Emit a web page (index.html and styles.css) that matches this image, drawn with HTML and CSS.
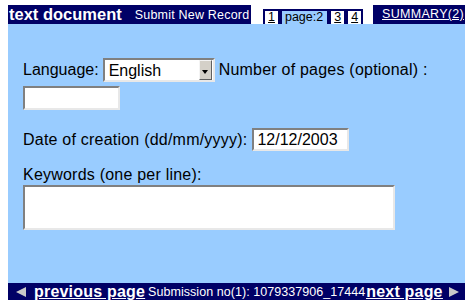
FILE: index.html
```html
<!DOCTYPE html>
<html lang="en">
<head>
    <meta charset="UTF-8">
    <title>text document - Submit New Record</title>
    <link rel="stylesheet" href="styles.css">
</head>
<body>
    <div class="topbar">
        <div class="title">
            <span class="doc">text document</span>
            <span class="sub">Submit New Record</span>
        </div>
        <nav class="tabs">
            <a href="#" class="tab">1</a>
            <span class="tab current">page:2</span>
            <a href="#" class="tab">3</a>
            <a href="#" class="tab">4</a>
        </nav>
        <a href="#" class="summary">SUMMARY(2)</a>
    </div>

    <form class="panel">
        <div class="row wrap">
            <label for="lang" class="short">Language:</label>
            <span class="select">
                <select id="lang">
                    <option>English</option>
                    <option>French</option>
                    <option>German</option>
                </select>
                <span class="drop"><span class="tri"></span></span>
            </span>
            <label for="pages">Number of pages (optional) :</label>
            <input type="text" id="pages" class="field">
        </div>
        <div class="row date">
            <label for="date">Date of creation (dd/mm/yyyy):</label>
            <input type="text" id="date" class="field" value="12/12/2003">
        </div>
        <label for="kw" class="block">Keywords (one per line):</label>
        <textarea id="kw" class="field keywords"></textarea>
    </form>

    <div class="bottombar">
        <a href="#" class="nav prev"><span class="arrow left"></span><span class="link">previous page</span></a>
        <span class="subno">Submission no(1): 1079337906_17444</span>
        <a href="#" class="nav next"><span class="link">next page</span><span class="arrow right"></span></a>
    </div>
</body>
</html>
```

FILE: styles.css
```css
/* general */
body {
    margin: 5px 5px 0 8px;
    background: white;
    font-family: "Liberation Sans", Arial, sans-serif;
    font-size: 16px;
    color: black;
}
a {
    color: inherit;
}

/* top bar */
.topbar {
    display: flex;
    align-items: flex-end;
    height: 19px;
}
.title {
    box-sizing: border-box;
    width: 243px;
    height: 19px;
    padding-left: 1px;
    display: flex;
    align-items: center;
    gap: 13px;
    background: #000066;
    color: white;
    white-space: nowrap;
}
.doc {
    font-weight: bold;
    font-size: 16.5px;
}
.sub {
    font-size: 12.5px;
    letter-spacing: 0.2px;
}
.tabs {
    display: flex;
    margin-left: 12px;
    height: 15px;
}
.tab {
    box-sizing: border-box;
    height: 15px;
    padding: 0 3px;
    border: 2px solid #000066;
    border-bottom: none;
    background: white;
    font-size: 12.5px;
    line-height: 13px;
    color: black;
}
.tab.current {
    background: #99ccff;
    padding: 0 4px 0 3px;
}
.summary {
    box-sizing: border-box;
    margin-left: auto;
    width: 92px;
    height: 19px;
    padding-left: 9px;
    background: #000066;
    color: white;
    font-size: 12.5px;
    letter-spacing: 0.3px;
    line-height: 19px;
}

/* form */
.panel {
    box-sizing: border-box;
    height: 259px;
    margin: 0;
    padding: 34px 15px 0 15px;
    background: #99ccff;
    letter-spacing: 0.22px;
}
.row {
    display: flex;
    align-items: center;
    gap: 4px;
}
.row.wrap {
    flex-wrap: wrap;
}
.short {
    letter-spacing: 0;
}
.row.date {
    margin-top: 18px;
    gap: 5px;
}
.field {
    box-sizing: border-box;
    width: 97px;
    height: 24px;
    margin: 0;
    padding: 0 3px;
    border: 2px solid;
    border-color: #808080 #e8e8e8 #e8e8e8 #808080;
    background: white;
    font-family: inherit;
    font-size: 16px;
    letter-spacing: 0;
}
.row.date .field {
    height: 23px;
}
.select {
    box-sizing: border-box;
    display: flex;
    align-items: center;
    width: 112px;
    height: 24px;
    border: 2px solid;
    border-color: #808080 #e8e8e8 #e8e8e8 #808080;
    background: white;
}
.select select {
    appearance: none;
    flex: 1;
    min-width: 0;
    height: 20px;
    border: none;
    padding: 0 0 0 4px;
    background: transparent;
    font-family: inherit;
    font-size: 16px;
    color: black;
}
.drop {
    box-sizing: border-box;
    width: 13px;
    height: 20px;
    margin-right: 1px;
    display: flex;
    align-items: center;
    justify-content: center;
    background: #d4d0c8;
    border: 1px solid;
    border-color: #f4f4f4 #606060 #606060 #f4f4f4;
}
.tri {
    width: 0;
    height: 0;
    border-left: 3px solid transparent;
    border-right: 3px solid transparent;
    border-top: 4px solid black;
    margin-top: 3px;
}
.block {
    display: block;
    margin-top: 15px;
    line-height: 18px;
}
.keywords {
    display: block;
    width: 372px;
    height: 45px;
    margin-top: 1px;
    resize: none;
}

/* bottom bar */
.bottombar {
    display: flex;
    align-items: center;
    height: 17px;
    padding-left: 8px;
    background: #000066;
    color: white;
    white-space: nowrap;
}
.nav {
    display: flex;
    align-items: center;
    font-weight: bold;
    font-size: 16px;
    letter-spacing: 0.2px;
    line-height: 17px;
}
.prev {
    gap: 8px;
}
.next {
    gap: 6px;
}
.link {
    text-decoration: underline;
}
.subno {
    margin: 0 1px 0 3px;
    font-size: 12.5px;
    letter-spacing: 0.05px;
}
.arrow {
    width: 0;
    height: 0;
    border-top: 5px solid transparent;
    border-bottom: 5px solid transparent;
}
.arrow.left {
    border-right: 10px solid #c8c8c8;
}
.arrow.right {
    border-left: 10px solid #c8c8c8;
}
```
